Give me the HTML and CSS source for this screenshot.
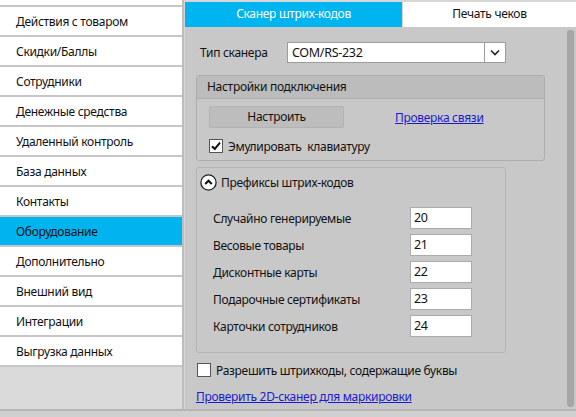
FILE: index.html
```html
<!DOCTYPE html>
<html lang="ru">
<head>
<meta charset="utf-8">
<link rel="stylesheet" href="styles.css">
</head>
<body>
<div class="app">
  <div class="sidebar">
    <div class="item partial"></div>
    <div class="item">Действия с товаром</div>
    <div class="item">Скидки/Баллы</div>
    <div class="item">Сотрудники</div>
    <div class="item">Денежные средства</div>
    <div class="item">Удаленный контроль</div>
    <div class="item">База данных</div>
    <div class="item">Контакты</div>
    <div class="item active">Оборудование</div>
    <div class="item">Дополнительно</div>
    <div class="item">Внешний вид</div>
    <div class="item">Интеграции</div>
    <div class="item">Выгрузка данных</div>
  </div>
  <div class="main">
    <div class="tabs">
      <div class="tab active">Сканер штрих-кодов</div>
      <div class="tab">Печать чеков</div>
    </div>
    <div class="content">
      <div class="panel">
        <div class="type-row">
          <span class="type-label">Тип сканера</span>
          <div class="select">
            <span class="select-value">COM/RS-232</span>
            <span class="select-arrow">
              <svg width="10" height="7" viewBox="0 0 10 7"><path d="M1 1.5 L5 5.5 L9 1.5" fill="none" stroke="#222" stroke-width="1.6"/></svg>
            </span>
          </div>
        </div>
        <div class="group conn">
          <div class="group-head">Настройки подключения</div>
          <div class="group-body">
            <div class="btn-row">
              <div class="button">Настроить</div>
              <span class="link">Проверка связи</span>
            </div>
            <div class="check-row">
              <span class="checkbox checked">
                <svg width="12" height="12" viewBox="0 0 12 12"><path d="M2 6.2 L4.8 9 L10 2.6" fill="none" stroke="#111" stroke-width="2"/></svg>
              </span>
              <span>Эмулировать&nbsp; клавиатуру</span>
            </div>
          </div>
        </div>
        <div class="group prefixes">
          <div class="prefix-head">
            <span class="collapse">
              <svg width="17" height="17" viewBox="0 0 17 17"><circle cx="8.5" cy="8.5" r="7.6" fill="#fff" stroke="#222" stroke-width="1.3"/><path d="M5.2 10 L8.5 6.7 L11.8 10" fill="none" stroke="#111" stroke-width="2"/></svg>
            </span>
            <span>Префиксы штрих-кодов</span>
          </div>
          <div class="prefix-list">
            <div class="prefix-row"><span>Случайно генерируемые</span><span class="field">20</span></div>
            <div class="prefix-row"><span>Весовые товары</span><span class="field">21</span></div>
            <div class="prefix-row"><span>Дисконтные карты</span><span class="field">22</span></div>
            <div class="prefix-row"><span>Подарочные сертификаты</span><span class="field">23</span></div>
            <div class="prefix-row"><span>Карточки сотрудников</span><span class="field">24</span></div>
          </div>
        </div>
        <div class="check-row allow">
          <span class="checkbox"></span>
          <span>Разрешить штрихкоды, содержащие буквы</span>
        </div>
        <div class="link-row"><span class="link">Проверить 2D-сканер для маркировки</span></div>
      </div>
      <div class="scrollbar"><div class="thumb"></div></div>
    </div>
  </div>
</div>
<div class="footer"></div>
</body>
</html>
```
FILE: styles.css
```css
* { box-sizing: border-box; }
html, body { margin: 0; padding: 0; }
body {
  width: 576px;
  height: 417px;
  overflow: hidden;
  background: #cfcfcf;
  font-family: "Noto Sans", "Open Sans", sans-serif;
  font-size: 12px;
  letter-spacing: -0.3px;
  color: #111;
}
.app {
  display: flex;
  height: 409px;
}
.sidebar {
  width: 182px;
  background: #dadada;
  flex: none;
}
.item {
  height: 30px;
  background: #fff;
  border-bottom: 2px solid #c6c6c6;
  padding-left: 16px;
  padding-top: 1px;
  line-height: 27px;
  white-space: nowrap;
}
.item.partial { height: 7px; padding: 0; }
.item.active { background: #00b4f0; }
.main {
  flex: 1;
  display: flex;
  flex-direction: column;
  border-left: 2px solid #bdbdbd;
  background: #d6d6d6;
}
.tabs {
  display: flex;
  height: 27px;
  padding-top: 2px;
  padding-left: 1px;
  background: #d6d6d6;
}
.tab {
  flex: 1;
  text-align: center;
  background: #fff;
  line-height: 24px;
  color: #111;
}
.tab.active {
  flex: none;
  width: 217px;
  background: #00b4f0;
  color: #fff;
  margin-right: 1px;
}
.content {
  flex: 1;
  display: flex;
  background: #c8c8c8;
  border-left: 1px solid #d8d8d8;
}
.panel {
  flex: 1;
  padding-left: 11px;
}
.type-row {
  display: flex;
  align-items: center;
  margin-top: 15px;
  height: 21px;
}
.type-label {
  width: 91px;
  padding-left: 4px;
}
.select {
  width: 219px;
  height: 21px;
  background: #fff;
  border: 1px solid #9c9c9c;
  display: flex;
  align-items: center;
}
.select-value {
  flex: 1;
  padding-left: 4px;
  font-size: 12.5px;
}
.select-arrow {
  width: 21px;
  height: 100%;
  border-left: 1px solid #9c9c9c;
  display: flex;
  align-items: center;
  justify-content: center;
}
.group {
  border: 1px solid #adadad;
  border-radius: 3px;
}
.conn {
  margin-top: 12px;
  width: 349px;
  height: 86px;
}
.group-head {
  height: 23px;
  line-height: 22px;
  background: #bcbcbc;
  padding-left: 10px;
  border-bottom: 1px solid #b0b0b0;
}
.group-body {
  padding: 7px 0 0 12px;
}
.btn-row {
  display: flex;
  align-items: center;
  height: 22px;
}
.button {
  width: 135px;
  height: 22px;
  line-height: 20px;
  text-align: center;
  background: #bdbdbd;
  border: 1px solid #b2b2b2;
  border-radius: 2px;
}
.link {
  color: #1a1ad0;
  text-decoration: underline;
}
.btn-row .link { margin-left: 51px; }
.check-row {
  display: flex;
  align-items: center;
  height: 14px;
  margin-top: 11px;
  gap: 5px;
}
.checkbox {
  width: 14px;
  height: 14px;
  background: #fff;
  border: 1px solid #555;
  display: flex;
  align-items: center;
  justify-content: center;
}
.prefixes {
  margin-top: 6px;
  width: 310px;
  height: 186px;
  border-color: #b4b4b4;
}
.prefix-head {
  display: flex;
  align-items: center;
  gap: 4px;
  padding: 4px 0 0 3px;
  height: 21px;
  box-sizing: content-box;
}
.collapse { display: flex; }
.prefix-list {
  margin-top: 14px;
  padding-left: 16px;
}
.prefix-row {
  display: flex;
  align-items: center;
  height: 22px;
  margin-bottom: 5px;
}
.prefix-row > span:first-child {
  width: 197px;
}
.field {
  width: 62px;
  height: 22px;
  background: #fff;
  border: 1px solid #ababab;
  padding-left: 3px;
  line-height: 20px;
  font-size: 12.5px;
}
.allow {
  margin-top: 10px;
  padding-left: 1px;
}
.link-row {
  margin-top: 11px;
}
.scrollbar {
  width: 11px;
  padding: 3px 2px 2px 2px;
  background: #c8c8c8;
}
.thumb {
  width: 7px;
  height: 100%;
  background: #a6a6a6;
  border-radius: 3px;
}
.footer {
  height: 8px;
  border-top: 2px solid #b5b5b5;
  background: #d0d0d0;
}
```
